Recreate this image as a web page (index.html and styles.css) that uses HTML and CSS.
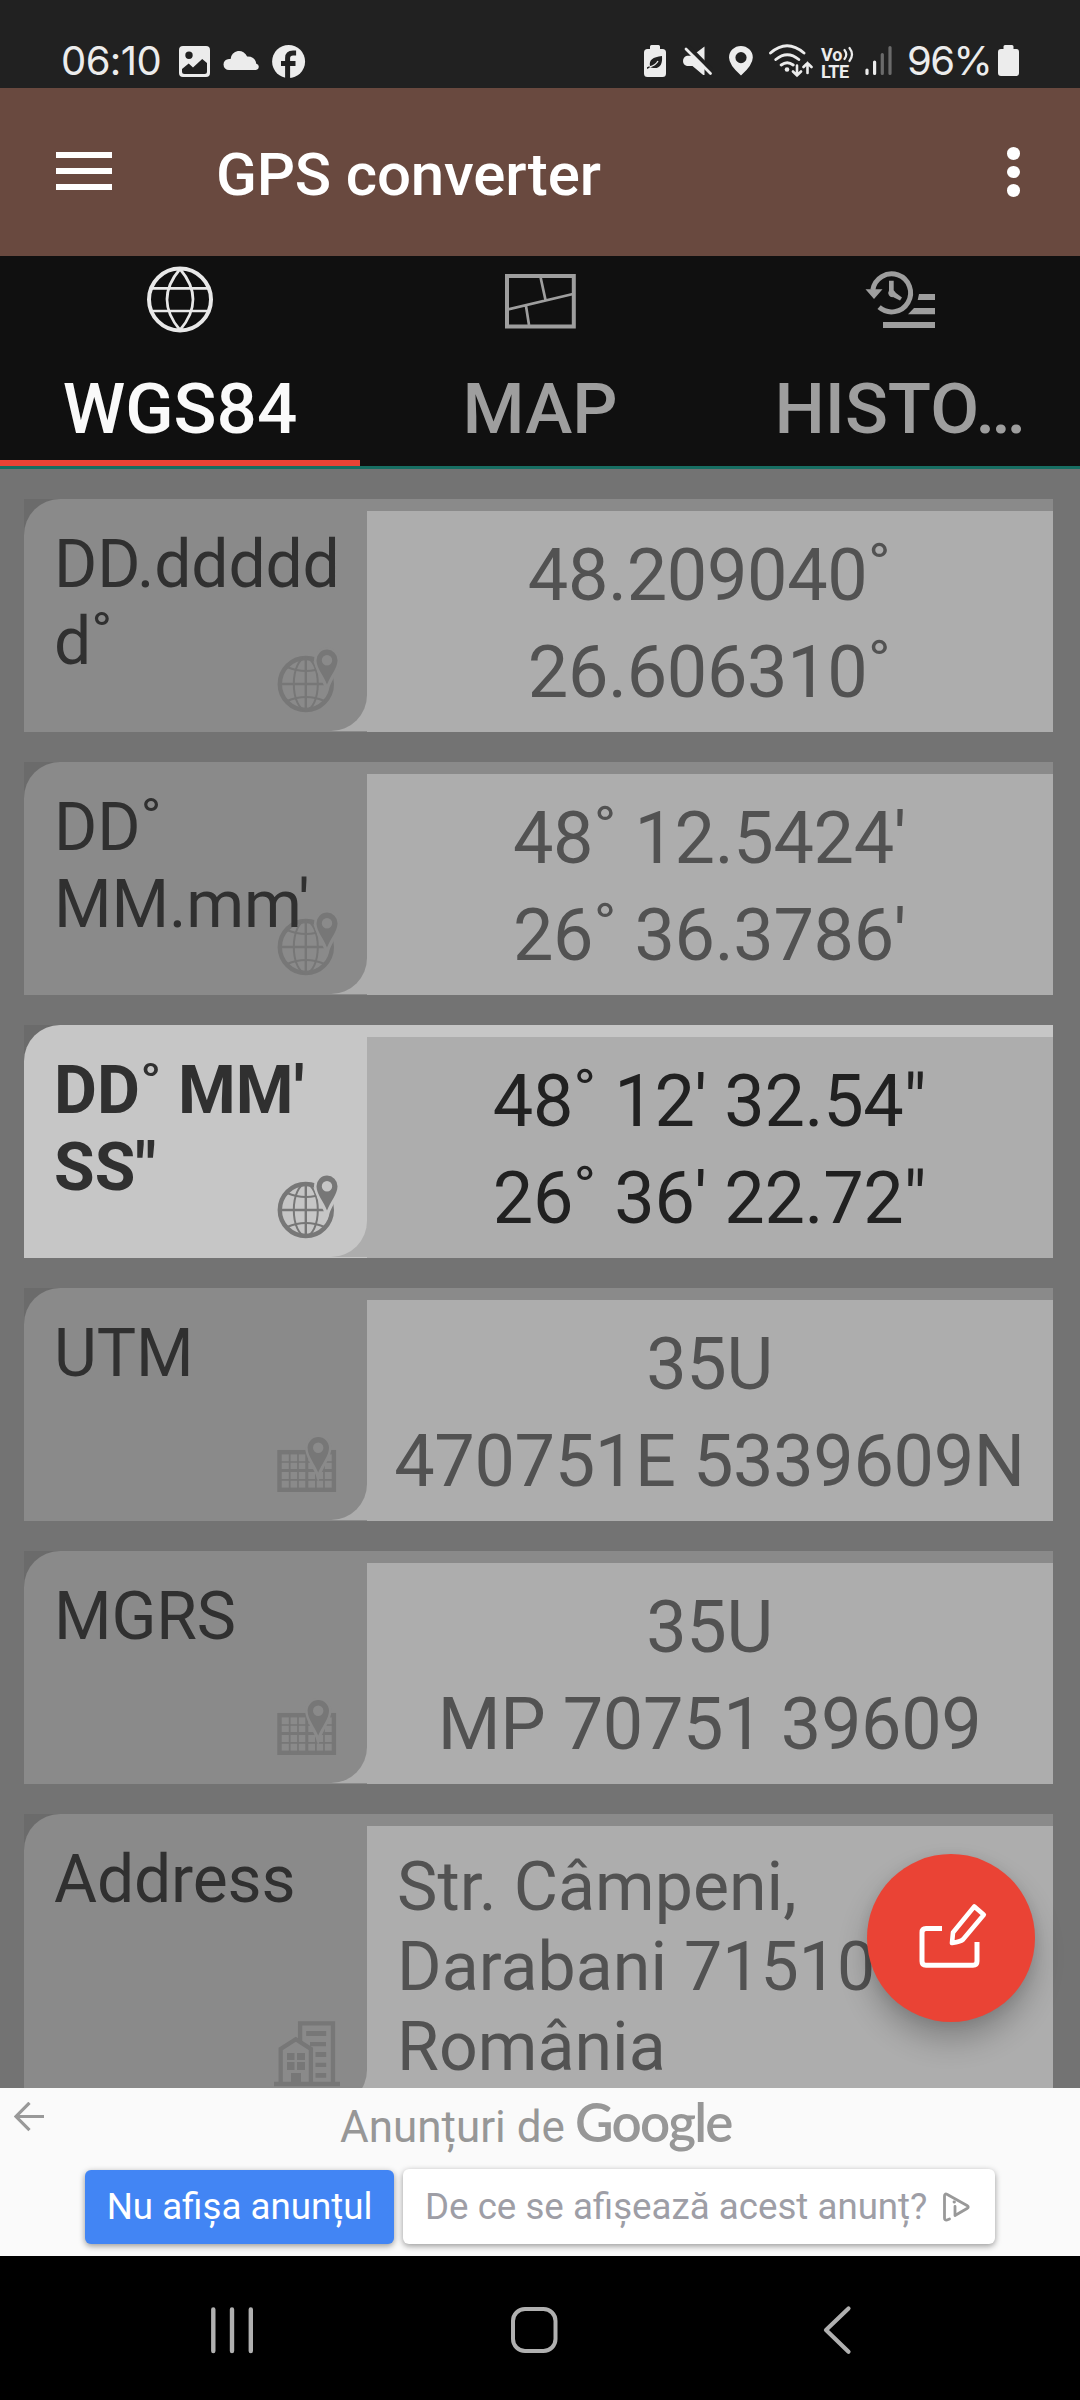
FILE: index.html
```html
<!DOCTYPE html>
<html lang="ro">
<head>
<meta charset="utf-8">
<title>GPS converter</title>
<link rel="stylesheet" href="styles.css">
</head>
<body>
<svg class="defs" width="0" height="0" aria-hidden="true">
  <symbol id="globe-pin" viewBox="272 646 70 70">
    <g fill="none" stroke="#777">
      <circle cx="305.8" cy="684" r="26" stroke-width="4.4"/>
      <ellipse cx="305.8" cy="684" rx="12" ry="26" stroke-width="2"/>
      <path d="M305.8 658v52M280 684h52" stroke-width="2.4"/>
      <path d="M287 667q19 8 37.600 0M287 701q19 -8 37.600 0" stroke-width="2"/>
    </g>
    <path class="gap" d="M327 686.500C324 678 316.500 668 316.500 660.500a10.500 10.800 0 0 1 21 0C337.500 668 330 678 327 686.500z" stroke-width="5"/>
    <path fill="#777" fill-rule="evenodd" d="M327 684.500C324 676 316.500 668 316.500 660.200a10.500 10.600 0 0 1 21 0C337.500 668 330 676 327 684.500zM327 655a5.200 5.200 0 1 0 0 10.400a5.200 5.200 0 0 0 0-10.400z"/>
  </symbol>
  <symbol id="grid-pin" viewBox="272 1435 70 70">
    <g fill="none" stroke="#777">
      <rect x="279.500" y="1452.200" width="54.400" height="37.600" stroke-width="4.400"/>
      <path d="M289.700 1452v38M298 1452v38M315.900 1452v38M324 1452v38M279 1462h55M279 1479.800h55" stroke-width="1.700"/>
      <path d="M306.800 1452v38M279 1470.600h55" stroke-width="3"/>
    </g>
    <path class="gap" d="M318.200 1474.500C315 1465 307.600 1456 307.600 1448a10.700 10.800 0 0 1 21.400 0C329 1456 321.500 1465 318.200 1474.500z" stroke-width="5"/>
    <path fill="#777" fill-rule="evenodd" d="M318.200 1472.500C315 1464 307.600 1456 307.600 1447.700a10.700 10.700 0 0 1 21.400 0C329 1456 321.500 1464 318.200 1472.500zM318.200 1442.500a5.200 5.200 0 1 0 0 10.400a5.200 5.200 0 0 0 0-10.400z"/>
  </symbol>
  <symbol id="buildings" viewBox="272 2018 70 70">
    <g fill="none" stroke="#777" stroke-width="4.300">
      <path d="M300.100 2042v-18.700h32.900V2084"/>
      <path d="M280.700 2084v-35l15.100-9.800l15.100 9.800v35"/>
      <path d="M274 2084h66"/>
    </g>
    <path fill="#777" d="M287 2053h7.500v7H287zM297 2053h8v7h-8zM287 2062h7.500v8H287zM297 2062h8v8h-8zM291 2073h10v9h-10zM306.200 2031h20v5h-20zM310 2042h16v4.200h-16zM315.500 2052h10.700v5h-10.700zM315.500 2062.700h10.700v4.400h-10.700zM315.500 2073h10.700v4.700h-10.700z"/>
  </symbol>
</svg>

<header class="status">
  <span class="clock">06:10</span>
  <svg class="s-image" width="32" height="40" viewBox="179 40 32 40">
    <path fill="#ececec" fill-rule="evenodd" d="M183 46h23q4 0 4 4v23q0 4-4 4h-23q-4 0-4-4V50q0-4 4-4zM189 51.500a3.700 3.700 0 1 0 0 7.400a3.700 3.700 0 0 0 0-7.400zM182 69v2.500q0 2.500 2.500 2.500h20q2.500 0 2.500-2.500V63l-4.800-4L193 67.500l-4.300-4z"/>
  </svg>
  <svg class="s-cloud" width="37" height="40" viewBox="223 40 37 40">
    <path fill="#ececec" d="M229 70a5.500 5.500 0 0 1 0-11q1.200 0 1.600.1a8.500 8.500 0 0 1 16.500-2.500q8-.2 9.200 7.100a3.200 3.200 0 0 1-.3 6.300z"/>
  </svg>
  <svg class="s-fb" width="34" height="40" viewBox="272 40 34 40">
    <circle cx="288.600" cy="61.500" r="16.500" fill="#ececec"/>
    <path fill="none" stroke="#212121" stroke-width="5" d="M287.600 79V58q0-5 5.500-5h3M281 63.500h14.500"/>
  </svg>
  <svg class="s-leaf" width="23" height="40" viewBox="644 40 23 40">
    <path fill="#ececec" d="M650 49v-2.500q0-1.500 1.500-1.500h7q1.500 0 1.500 1.500V49h2.500q3.500 0 3.500 3.500v21q0 3.500-3.500 3.500h-15q-3.500 0-3.500-3.500v-21q0-3.500 3.500-3.500z"/>
    <path fill="#212121" d="M662 56q1 13-8.500 12q-2-.2-3-.8l-3.500 1.800v-1.700l3-1.300q-2-8.500 12-10z"/>
    <path fill="none" stroke="#ececec" stroke-width="1.300" d="M649.500 67q6-1.500 8.500-6"/>
  </svg>
  <svg class="s-mute" width="30" height="40" viewBox="683 40 30 40">
    <path fill="#ececec" d="M704.500 46.500V75h-1.300L692.500 66H687q-4-1-4-5t4-5.300h5.300z"/>
    <path stroke="#212121" stroke-width="4" d="M688 46.500l27 27"/>
    <path stroke="#ececec" stroke-width="2.800" stroke-linecap="round" d="M686 49l24.500 24.500"/>
  </svg>
  <svg class="s-pin" width="25" height="40" viewBox="729 40 25 40">
    <path fill="#ececec" fill-rule="evenodd" d="M741 75.500q-12-10.500-12-18a11.900 11.500 0 0 1 23.800 0q0 7.500-11.800 18zM741 52a5.600 5.600 0 1 0 0 11.200a5.600 5.600 0 0 0 0-11.200z"/>
  </svg>
  <svg class="s-wifi" width="44" height="40" viewBox="769 40 44 40">
    <g fill="none" stroke="#ececec" stroke-width="2.900" stroke-linecap="round">
      <path d="M770.500 53q16.500-14.500 33.500 0M775.800 59.500q11.500-9.500 23 0M781.200 65q6-4.500 12 0"/>
      <path d="M797 65.500v10M793 71.500l4 4l4-4M807.500 73V63M803.500 67l4-4l4 4" stroke-width="2.600"/>
    </g>
    <circle cx="787" cy="69.500" r="2.300" fill="#ececec"/>
  </svg>
  <span class="volte"><span>Vo<svg width="11" height="17" viewBox="0 0 11 17"><path fill="none" stroke="#ececec" stroke-width="2.200" stroke-linecap="round" d="M1.500 4q3.500 4.500 0 9M6.500 2q5 6.500 0 13"/></svg></span><span class="lte">LTE</span></span>
  <svg class="s-signal" width="28" height="40" viewBox="865 40 28 40">
    <g stroke-width="3.200" stroke-linecap="round"><path stroke="#ececec" d="M867 70v3.500M874.600 62v11.500"/><path stroke="#6b6b6b" d="M882.300 54.500v19M890 47.500v26"/></g>
  </svg>
  <span class="percent">96%</span>
  <svg class="s-batt" width="22" height="40" viewBox="998 40 22 40">
    <path fill="#ececec" d="M1003.500 49v-2.500q0-1.500 1.500-1.500h7q1.500 0 1.500 1.500V49h3q2.500 0 2.500 3v21q0 3-3 3h-15q-3 0-3-3V52q0-3 3-3z"/>
  </svg>
</header>

<div class="toolbar">
  <div class="menu"><i></i><i></i><i></i></div>
  <h1>GPS converter</h1>
  <div class="more"><i></i><i></i><i></i></div>
</div>

<nav class="tabs">
  <div class="tab active">
    <svg width="72" height="72" viewBox="144 264 72 72" fill="none" stroke="#e8e8e8" stroke-width="2.700">
      <circle cx="180" cy="299.500" r="31" stroke-width="4"/>
      <path d="M180 269q-26 30.500 0 61q26-30.500 0-61M151 288.400h58M151 311h58"/>
    </svg>
    <span>WGS84</span>
  </div>
  <div class="tab">
    <svg width="72" height="72" viewBox="504 264 72 72" fill="none" stroke="#9e9e9e" stroke-width="2.700">
      <path stroke-width="4" d="M507 276h66.800v50.500H507z"/>
      <path d="M508 309.500l65-15.500M526 306l3 19M540.500 277l5 23"/>
    </svg>
    <span>MAP</span>
  </div>
  <div class="tab">
    <svg width="72" height="72" viewBox="864 264 72 72" fill="#9e9e9e">
      <path fill="none" stroke="#9e9e9e" stroke-width="5" d="M872.800 290a19 19 0 1 1 6.300 17.200"/>
      <path d="M865.500 289.300h17l-8.500 9.700zM889 280.700h4.700v9.500l2.300 2.700l6 4.500l-2 3.200l-7-3.500a4.200 4.200 0 0 1-4-6.500zM919 294h16v6h-17.300zM914 308h21v6.300h-27zM883 322h52v6h-52z"/>
    </svg>
    <span>HISTO…</span>
  </div>
</nav>

<main class="list">
  <section class="card">
    <div class="label"><svg><use href="#globe-pin"/></svg><p>DD.ddddd<br>d˚</p></div>
    <div class="value">48.209040˚<br>26.606310˚</div>
  </section>
  <section class="card">
    <div class="label"><svg><use href="#globe-pin"/></svg><p>DD˚<br>MM.mm'</p></div>
    <div class="value">48˚ 12.5424'<br>26˚ 36.3786'</div>
  </section>
  <section class="card selected">
    <div class="label"><svg><use href="#globe-pin"/></svg><p>DD˚ MM'<br>SS"</p></div>
    <div class="value">48˚ 12' 32.54"<br>26˚ 36' 22.72"</div>
  </section>
  <section class="card">
    <div class="label"><svg><use href="#grid-pin"/></svg><p>UTM</p></div>
    <div class="value">35U<br>470751E 5339609N</div>
  </section>
  <section class="card">
    <div class="label"><svg><use href="#grid-pin"/></svg><p>MGRS</p></div>
    <div class="value">35U<br>MP 70751 39609</div>
  </section>
  <section class="card address">
    <div class="label"><svg><use href="#buildings"/></svg><p>Address</p></div>
    <div class="value">Str. Câmpeni,<br>Darabani 71510<br>România</div>
  </section>
  <div class="fab">
    <svg width="76" height="76" viewBox="913 1900 76 76" fill="none" stroke="#fff" stroke-width="5" stroke-linejoin="round">
      <path d="M942 1928.600h-16q-4 0-4 4v28.600q0 4 4 4h47q4 0 4-4V1942"/>
      <path stroke-width="4.600" d="M952 1943l1-10.500l21.300-26l9.500 8.300l-20.800 24.700q-2 2-11 3.500z"/>
    </svg>
  </div>
</main>

<aside class="ad">
  <svg class="ad-back" width="30" height="30" viewBox="14 2102 30 30" fill="none" stroke="#999" stroke-width="3.200"><path d="M29.500 2102.800L16 2116.500l13.500 13.700M16 2116.500h28"/></svg>
  <div class="ad-by"><span>Anunțuri de</span><b>Google</b></div>
  <div class="ad-actions">
    <div class="btn blue">Nu afișa anunțul</div>
    <div class="btn white">De ce se afișează acest anunț?
      <svg width="28" height="30" viewBox="0 0 28 30" fill="none" stroke="#999" stroke-width="2.800" stroke-linecap="round" stroke-linejoin="round"><path d="M7.500 27l-2.500 1q-2.500.5-2.500-2V4q0-3 2.800-1.500L25 13.500q2.500 1.500 0 3L13 23.500v-9"/><path d="M12 10h.5"/></svg>
    </div>
  </div>
</aside>

<footer class="nav">
  <svg width="1080" height="144" viewBox="0 2256 1080 144" fill="none" stroke="#b0b0b0" stroke-linecap="round">
    <path stroke-width="4.400" d="M213.300 2309.500v41.500M232 2309.500v41.500M250.800 2309.500v41.500"/>
    <rect x="513" y="2309" width="42.500" height="42" rx="12" stroke-width="4"/>
    <path stroke-width="4.200" stroke-linejoin="round" d="M848.500 2308.500L826 2330l22.500 21.800"/>
  </svg>
</footer>
</body>
</html>
```
FILE: styles.css
```css
* { box-sizing: border-box; }
body {
  margin: 0;
  width: 1080px;
  height: 2400px;
  overflow: hidden;
  display: flex;
  flex-direction: column;
  background: #000;
  font-family: Roboto, "Noto Sans", sans-serif;
}
svg { display: block; flex: none; }
.defs { position: absolute; }
.gap { fill: var(--tab); stroke: var(--tab); }

.status {
  height: 88px;
  background: #212121;
  color: #ececec;
  display: flex;
  align-items: flex-start;
  padding: 40px 60px 0 61px;
  font: 400 40px/41px Inter, Roboto, sans-serif;
}
.clock { width: 118px; letter-spacing: -0.6px; }
.s-cloud { margin-left: 12px; }
.s-fb { margin-left: 12px; }
.s-leaf { margin-left: auto; }
.s-mute { margin-left: 16px; }
.s-pin { margin-left: 16px; }
.s-wifi { margin-left: 15px; }
.volte {
  width: 32px;
  margin: 6px 0 0 8px;
  display: flex;
  flex-direction: column;
  font: 700 18px/17px Roboto, sans-serif;
}
.volte span { display: flex; white-space: nowrap; }
.volte .lte { letter-spacing: -0.5px; }
.s-signal { margin-left: 12px; }
.percent { width: 91px; margin-left: 14px; letter-spacing: -1.5px; white-space: nowrap; }

.toolbar {
  height: 168px;
  background: #69493f;
  display: flex;
  align-items: center;
  padding: 0 60px 0 56px;
}
.menu { display: grid; gap: 10px; width: 56px; padding-bottom: 2px; }
.menu i { height: 6px; background: #fff; }
.toolbar h1 {
  margin: 0;
  padding: 5px 0 0 104px;
  font: 500 60px/70px Roboto, sans-serif;
  letter-spacing: -0.15px;
  color: #fff;
}
.more { display: grid; gap: 6px; margin-left: auto; }
.more i { width: 13px; height: 12.5px; border-radius: 50%; background: #fff; }

.tabs {
  height: 213px;
  background: #101010;
  border-bottom: 3px solid #176e62;
  display: grid;
  grid-template-columns: repeat(3, 360px);
}
.tab {
  display: flex;
  flex-direction: column;
  align-items: center;
  padding-top: 8px;
  color: #9e9e9e;
  font-size: 71px;
  line-height: 72px;
  font-weight: 500;
}
.tab span { margin-top: 37px; }
.active { color: #fafafa; border-bottom: 6px solid #ea4335; }

.list {
  position: relative;
  height: 1619px;
  overflow: hidden;
  background: #737373;
  padding: 30px 27px 0 24px;
  display: flex;
  flex-direction: column;
  gap: 30px;
}
.card {
  --tab: #8a8a8a;
  flex: none;
  height: 233px;
  display: grid;
  grid-template-columns: 343px 1fr;
  background:
    linear-gradient(#6b6b6b, #6b6b6b) 0 0 / 40px 40px no-repeat,
    linear-gradient(var(--tab), var(--tab)) 0 100% / 343px 1px no-repeat,
    #adadad;
}
.selected { --tab: #c6c6c6; }
.label {
  position: relative;
  background: var(--tab);
  border-radius: 36px 0 36px 0;
  margin-bottom: 1px;
  padding: 27px 0 0 30px;
  color: #303030;
  font-size: 66px;
  line-height: 77px;
  letter-spacing: -0.15px;
}
.label p { position: relative; margin: 0; white-space: nowrap; }
.label svg { position: absolute; left: 248px; top: 147px; width: 70px; height: 70px; }
.selected .label { font-weight: 700; letter-spacing: 0; }
.value {
  border-top: 12px solid var(--tab);
  padding: 16px 1px 0 0;
  text-align: center;
  font-size: 72px;
  line-height: 97px;
  letter-spacing: -0.35px;
  color: #525252;
  white-space: nowrap;
}
.selected .value { color: #212121; }
.address { height: 293px; }
.address .label svg { top: 204px; }
.address .value { text-align: left; padding: 21px 0 0 30px; font-size: 68px; line-height: 80px; letter-spacing: 0.05px; }

.fab {
  position: absolute;
  left: 867px;
  top: 1385px;
  width: 168px;
  height: 168px;
  border-radius: 50%;
  background: #ea4335;
  box-shadow: 0 18px 30px rgba(0, 0, 0, .24), 0 2px 12px rgba(0, 0, 0, .08);
  padding: 46px;
}

.ad {
  height: 168px;
  background: #fafafa;
  position: relative;
  display: flex;
  flex-direction: column;
  align-items: center;
}
.ad-back { position: absolute; left: 14px; top: 14px; }
.ad-by {
  width: 400px;
  height: 81px;
  display: flex;
  align-items: baseline;
  gap: 12px;
  color: #979797;
  font-size: 44px;
  line-height: 78px;
  white-space: nowrap;
}
.ad-by span { width: 223px; }
.ad-by b { font: 600 53px/60px Lato, sans-serif; letter-spacing: -1.8px; }
.ad-actions { display: flex; gap: 9px; align-items: flex-end; }
.btn {
  border-radius: 6px;
  font-size: 36.7px;
  white-space: nowrap;
  box-shadow: 0 2px 6px rgba(0, 0, 0, .4);
}
.blue { width: 309px; height: 74px; line-height: 74px; text-align: center; background: #4285f4; color: #fff; }
.white {
  width: 592px;
  height: 75px;
  line-height: 72px;
  background: #fff;
  color: #9e9ea6;
  padding: 0 25px 0 22px;
  display: flex;
  align-items: center;
  justify-content: space-between;
}
.nav { height: 144px; background: #000; }
```
